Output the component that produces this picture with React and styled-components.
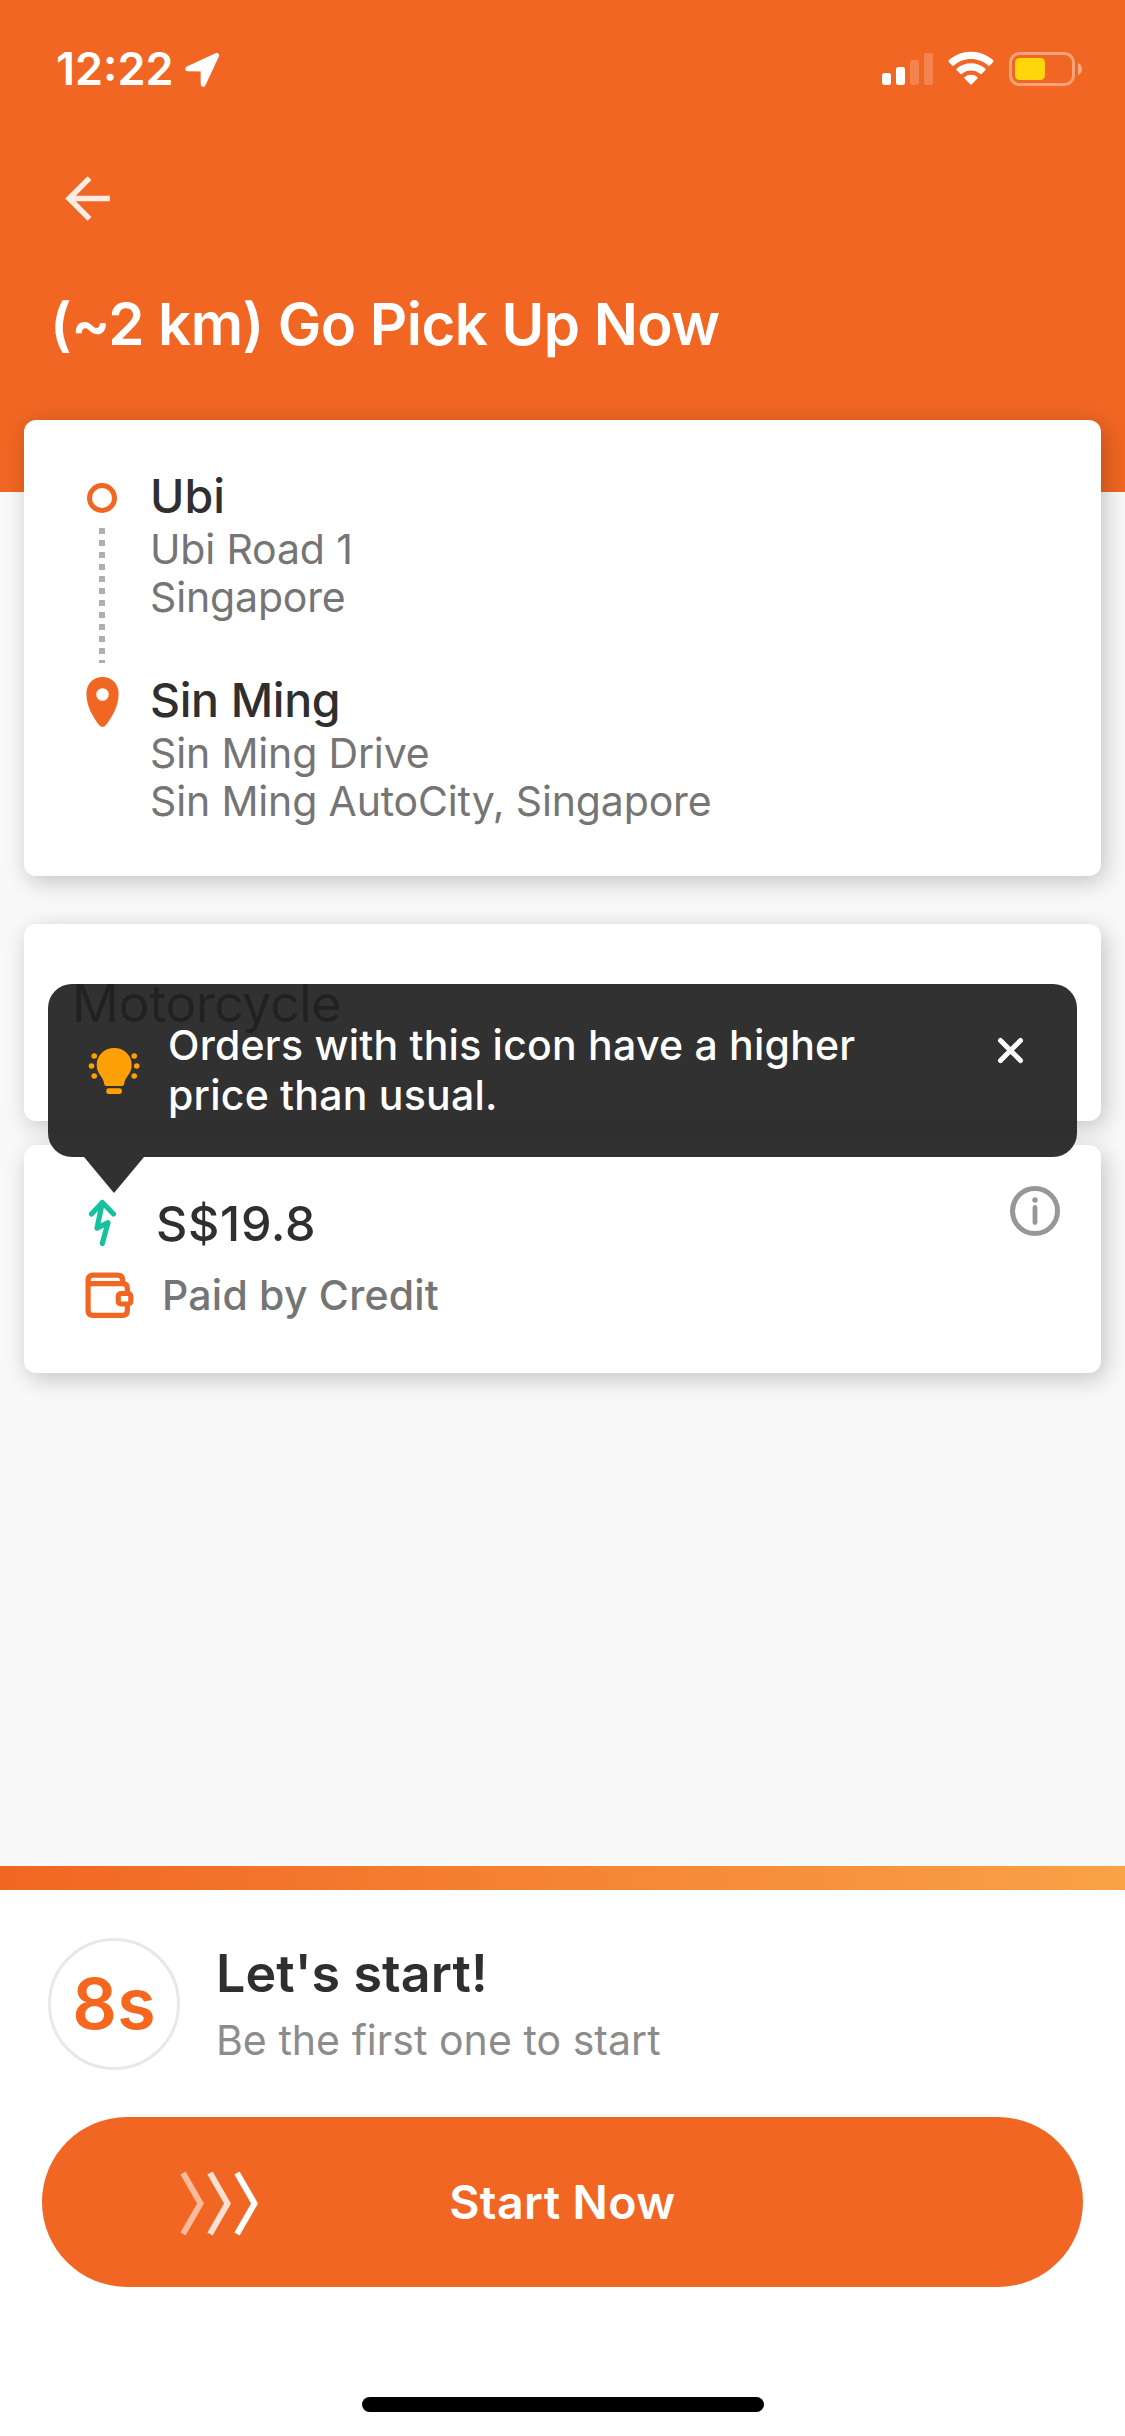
import React from "react";
import styled, { createGlobalStyle } from "styled-components";

const orange = "#f16622";

const GlobalStyle = createGlobalStyle`
  * { box-sizing: border-box; }
  body {
    margin: 0;
    background: #f9f9f9;
    font-family: Inter, "Liberation Sans", sans-serif;
    color: #2f2f2f;
  }
  svg { flex: none; display: block; }
`;

const Screen = styled.div`
  width: 1125px;
  height: 2436px;
  display: flex;
  flex-direction: column;
  overflow: hidden;
`;

const Header = styled.header`
  height: 492px;
  flex: none;
  background: ${orange};
  color: #fff;
`;

const StatusBar = styled.div`
  height: 138px;
  display: flex;
  justify-content: space-between;
  padding: 51px 42px 0 56px;
`;

const StatusGroup = styled.div`
  display: flex;
  align-items: flex-start;
  gap: ${(p) => p.$gap}px;
`;

const Text = styled.div`
  margin: 0;
  font-size: ${(p) => p.$size}px;
  line-height: ${(p) => p.$line}px;
  font-weight: ${(p) => p.$weight || 400};
  letter-spacing: ${(p) => p.$track || 0}px;
  color: ${(p) => p.$color || "inherit"};
  white-space: nowrap;
`;

const Clock = styled(Text)`
  margin-top: -9px;
`;

const BackButton = styled.button`
  display: block;
  margin: 27px 0 0 54px;
  padding: 0;
  border: 0;
  background: none;
  height: 67px;
  color: rgba(255, 255, 255, 0.87);
`;

const TitleRow = styled.div`
  padding: 56px 0 0 50px;
`;

const Content = styled.main`
  flex: 1;
  margin-top: -72px;
  padding: 0 24px;
  display: flex;
  flex-direction: column;
`;

const Card = styled.section`
  position: relative;
  flex: none;
  height: ${(p) => p.$height}px;
  margin-bottom: ${(p) => p.$after || 0}px;
  padding: ${(p) => p.$pad};
  border-radius: 12px;
  background: #fff;
  box-shadow: 4px 6px 24px rgba(0, 0, 0, 0.22);
`;

const Stop = styled.div`
  display: grid;
  grid-template-columns: 34px 1fr;
  column-gap: 31px;
  padding-bottom: ${(p) => p.$after || 0}px;
`;

const Rail = styled.div`
  display: flex;
  flex-direction: column;
  align-items: center;
  height: 0;
  padding-top: ${(p) => p.$top}px;
`;

const Origin = styled.span`
  width: 30px;
  height: 30px;
  flex: none;
  border: 5px solid ${orange};
  border-radius: 50%;
`;

const Dots = styled.span`
  width: 6px;
  height: 135px;
  flex: none;
  margin-top: 15px;
  background: repeating-linear-gradient(#afafaf 0 6px, transparent 6px 12px);
`;

const PriceRow = styled.div`
  display: flex;
  align-items: flex-start;
  height: 57px;
`;

const IconSlot = styled.span`
  display: flex;
  flex: none;
  width: ${(p) => p.$width}px;
  margin: ${(p) => p.$margin || 0};
`;

const CreditRow = styled.div`
  display: flex;
  align-items: center;
  height: 48px;
  margin-top: 18px;
`;

const Tooltip = styled.div`
  position: absolute;
  z-index: 2;
  left: 24px;
  top: 60px;
  width: 1029px;
  height: 173px;
  display: flex;
  align-items: flex-start;
  border-radius: 24px;
  background: rgba(32, 32, 32, 0.925);
  color: #fff;

  &::after {
    content: "";
    position: absolute;
    left: 36px;
    top: 173px;
    width: 60px;
    height: 36px;
    background: inherit;
    clip-path: polygon(0 0, 100% 0, 50% 100%);
  }
`;

const TooltipText = styled.div`
  flex: 1;
  padding: 36px 0 0 28px;
`;

const Footer = styled.footer`
  height: 570px;
  flex: none;
  display: flex;
  flex-direction: column;
  background: #fff;
`;

const Progress = styled.div`
  height: 24px;
  flex: none;
  background: linear-gradient(90deg, ${orange}, #f9a246);
`;

const Prompt = styled.div`
  display: flex;
  padding: 48px 48px 0;
  height: 227px;
`;

const Countdown = styled.div`
  width: 132px;
  height: 132px;
  display: flex;
  align-items: center;
  justify-content: center;
  border: 3px solid #e8e8e8;
  border-radius: 50%;
  color: #f5661e;
`;

const PromptText = styled.div`
  display: flex;
  flex-direction: column;
  gap: 2px;
  padding: 4px 0 0 36px;
`;

const StartButton = styled.button`
  position: relative;
  height: 170px;
  flex: none;
  margin: 0 42px;
  padding: 0;
  border: 0;
  border-radius: 85px;
  display: flex;
  align-items: center;
  justify-content: center;
  background: ${orange};
  color: #fff;
  font-family: inherit;
`;

const SwipeHint = styled.span`
  position: absolute;
  left: 137px;
  top: 53px;
  display: flex;
`;

const HomeIndicator = styled.div`
  width: 402px;
  height: 15px;
  margin: 110px auto 0;
  border-radius: 8px;
  background: #000;
`;

const LocationIcon = () => (
  <svg width="36" height="37" viewBox="0 -1 36 37">
    <path
      d="M2.800 16.800 31.600 3.400 18.200 32.300V17Z"
      fill="#fff"
      stroke="#fff"
      strokeWidth="5"
      strokeLinejoin="round"
    />
  </svg>
);

const SignalIcon = () => (
  <svg width="51" height="36" viewBox="0 0 51 36" fill="#fff">
    <rect x="0" y="22" width="9" height="12" rx="2.500" />
    <rect x="14" y="16" width="9" height="18" rx="2.500" />
    <rect x="28" y="9" width="9" height="25" rx="2.500" opacity=".2" />
    <rect x="42" y="2" width="9" height="32" rx="2.500" opacity=".2" />
  </svg>
);

const WifiIcon = () => (
  <svg width="46" height="35" viewBox="0 0 46 35" fill="#fff">
    <path d="M23 .8C14.500 .8 6.700 4 .8 9.300Q0 10.100 .8 11L4.200 14.400Q5 15.100 5.900 14.400C10.500 10.400 16.500 8 23 8S35.500 10.400 40.100 14.400Q41 15.100 41.800 14.400L45.200 11Q46 10.100 45.200 9.300C39.300 4 31.500 .8 23 .8Z" />
    <path d="M23 12.300C17.600 12.300 12.600 14.300 8.800 17.600Q7.900 18.500 8.700 19.300L12.200 22.800Q13 23.500 13.900 22.800C16.400 20.700 19.500 19.500 23 19.500S29.600 20.700 32.100 22.800Q33 23.500 33.800 22.800L37.300 19.300Q38.100 18.500 37.200 17.600C33.400 14.300 28.400 12.300 23 12.300Z" />
    <path d="M23 23.700Q19.300 23.700 16.600 25.900 15.900 26.600 16.600 27.400L22.200 33.200Q23 34 23.800 33.200L29.400 27.400Q30.100 26.600 29.400 25.900 26.700 23.700 23 23.700Z" />
  </svg>
);

const BatteryIcon = () => (
  <svg width="74" height="36" viewBox="0 0 74 36">
    <rect x="1.500" y="2.500" width="63" height="31" rx="9" fill="none" stroke="#fff" strokeOpacity=".4" strokeWidth="3" />
    <rect x="6" y="7" width="30" height="22" rx="4.500" fill="#ffd60a" />
    <path d="M69 12Q73 14 73 18T69 24Z" fill="#fff" fillOpacity=".45" />
  </svg>
);

const BackIcon = () => (
  <svg width="67" height="67" viewBox="0 0 24 24" fill="currentColor">
    <path d="M20 11H7.830l5.590-5.590L12 4l-8 8 8 8 1.410-1.410L7.830 13H20v-2z" />
  </svg>
);

const PinIcon = () => (
  <svg width="33" height="50" viewBox="0 0 33 50">
    <path
      d="M16.500 0C7 0 .4 7 .4 16.500.4 29 7 40.500 13.300 48.200Q16.500 51.600 19.700 48.200C26 40.500 32.600 29 32.600 16.500 32.600 7 26 0 16.500 0Z"
      fill={orange}
    />
    <circle cx="16.500" cy="17.500" r="6.300" fill="#fff" />
  </svg>
);

const BulbIcon = () => (
  <svg width="52" height="48" viewBox="0 0 52 48" fill="#ffa106">
    <path d="M26.200 1C16.200 1 8.700 8.400 8.700 18 8.700 27.500 15.700 29.500 16.200 37Q16.400 39 18.200 39H34.200Q36 39 36.200 37C36.700 29.500 43.700 27.500 43.700 18 43.700 8.400 36.200 1 26.200 1Z" />
    <rect x="18.300" y="41.300" width="15.600" height="5.700" rx="2.300" />
    <circle cx="6.200" cy="9" r="2.800" />
    <circle cx="3.500" cy="19" r="2.800" />
    <circle cx="6.200" cy="29" r="2.800" />
    <circle cx="46.200" cy="9" r="2.800" />
    <circle cx="48.700" cy="19" r="2.800" />
    <circle cx="46.200" cy="29" r="2.800" />
  </svg>
);

const CloseIcon = () => (
  <svg width="27" height="27" viewBox="0 0 27 27" fill="none" stroke="#fff" strokeWidth="5" strokeLinecap="round">
    <path d="M3.500 3.500 23.500 23.500M23.500 3.500 3.500 23.500" />
  </svg>
);

const SurgeIcon = () => (
  <svg width="28" height="48" viewBox="0 0 28 48" fill="none" stroke="#16c19c" strokeWidth="5.200" strokeLinecap="round" strokeLinejoin="round">
    <path d="M3.500 15 14.300 3.500 25.500 15M14.300 3.500 9 29.300 20 23.600 14.300 44.500" />
  </svg>
);

const WalletIcon = () => (
  <svg width="49" height="47" viewBox="0 0 49 47" fill="none" stroke={orange} strokeWidth="5.200" strokeLinejoin="round">
    <path d="M37.700 11.500V8.500Q37.700 3.100 32.500 3.100H8Q3.100 3.100 3.100 8V38.500Q3.100 43.400 8 43.400H37.500Q42.400 43.400 42.400 38.500V33M42.400 22V16.500Q42.400 11.700 37.700 11.700H3.100" />
    <rect x="33.300" y="21.500" width="12.500" height="10.500" rx="2.500" />
  </svg>
);

const InfoIcon = () => (
  <svg width="50" height="50" viewBox="0 0 50 50" fill="none" stroke="#979797" strokeLinecap="round">
    <circle cx="25" cy="25" r="22.500" strokeWidth="5" />
    <path d="M25 21.500V36.500" strokeWidth="4.800" />
    <circle cx="25" cy="14" r="2.700" fill="#979797" stroke="none" />
  </svg>
);

const ChevronsIcon = () => (
  <svg width="80" height="66" viewBox="0 0 80 66" fill="none" stroke="#fff" strokeWidth="6">
    <path d="M4 3 21.500 33.500 4 64" opacity=".55" />
    <path d="M31 3 48.500 33.500 31 64" opacity=".8" />
    <path d="M58 3 75.500 33.500 58 64" />
  </svg>
);

const Place = ({ name, track, lines }) => (
  <div>
    <Text $size={46.5} $line={57} $weight={500} $track={track}>{name}</Text>
    {lines.map((line) => (
      <Text key={line} $size={41} $line={48} $color="#757575" $track={-0.15}>{line}</Text>
    ))}
  </div>
);

export default function App() {
  return (
    <Screen>
      <GlobalStyle />
      <Header>
        <StatusBar>
          <StatusGroup $gap={11}>
            <Clock as="time" $size={45} $line={54} $weight={600}>12:22</Clock>
            <LocationIcon />
          </StatusGroup>
          <StatusGroup $gap={15}>
            <SignalIcon />
            <WifiIcon />
            <BatteryIcon />
          </StatusGroup>
        </StatusBar>
        <BackButton aria-label="Back"><BackIcon /></BackButton>
        <TitleRow>
          <Text as="h1" $size={58.2} $line={72} $weight={600} $track={-0.55}>(~2 km) Go Pick Up Now</Text>
        </TitleRow>
      </Header>

      <Content>
        <Card $height={456} $after={48} $pad="48px 48px 0 61px">
          <Stop $after={51}>
            <Rail $top={15}><Origin /><Dots /></Rail>
            <Place name="Ubi" lines={["Ubi Road 1", "Singapore"]} />
          </Stop>
          <Stop>
            <Rail $top={5}><PinIcon /></Rail>
            <Place name="Sin Ming" track={-0.35} lines={["Sin Ming Drive", "Sin Ming AutoCity, Singapore"]} />
          </Stop>
        </Card>

        <Card $height={197} $after={24} $pad="48px">
          <Text $size={52} $line={64} $track={-0.5}>Motorcycle</Text>
          <Tooltip role="tooltip">
            <IconSlot $width={52} $margin="63px 0 0 40px"><BulbIcon /></IconSlot>
            <TooltipText>
              <Text $size={41} $line={50} $weight={500} $track={0.23}>Orders with this icon have a higher</Text>
              <Text $size={41} $line={50} $weight={500} $track={0.23}>price than usual.</Text>
            </TooltipText>
            <IconSlot $width={27} $margin="53px 53px 0 0"><CloseIcon /></IconSlot>
          </Tooltip>
        </Card>

        <Card $height={228} $pad="51px 41px 0 61px">
          <PriceRow>
            <IconSlot $width={68} $margin="3px 0 0 3px"><SurgeIcon /></IconSlot>
            <Text $size={48.5} $line={56} $weight={500} $track={0.7}>S$19.8</Text>
            <IconSlot $width={50} $margin="-10px 0 0 auto"><InfoIcon /></IconSlot>
          </PriceRow>
          <CreditRow>
            <IconSlot $width={77}><WalletIcon /></IconSlot>
            <Text $size={41} $line={48} $weight={500} $color="#757575" $track={0.22}>Paid by Credit</Text>
          </CreditRow>
        </Card>
      </Content>

      <Footer>
        <Progress />
        <Prompt>
          <Countdown><Text $size={70} $line={84} $weight={600}>8s</Text></Countdown>
          <PromptText>
            <Text $size={52} $line={64} $weight={600} $track={0.1}>Let's start!</Text>
            <Text $size={41} $line={64} $color="#8c8c8c" $track={0.04}>Be the first one to start</Text>
          </PromptText>
        </Prompt>
        <StartButton>
          <SwipeHint><ChevronsIcon /></SwipeHint>
          <Text as="span" $size={46.5} $line={56} $weight={600} $track={0.4}>Start Now</Text>
        </StartButton>
        <HomeIndicator />
      </Footer>
    </Screen>
  );
}
